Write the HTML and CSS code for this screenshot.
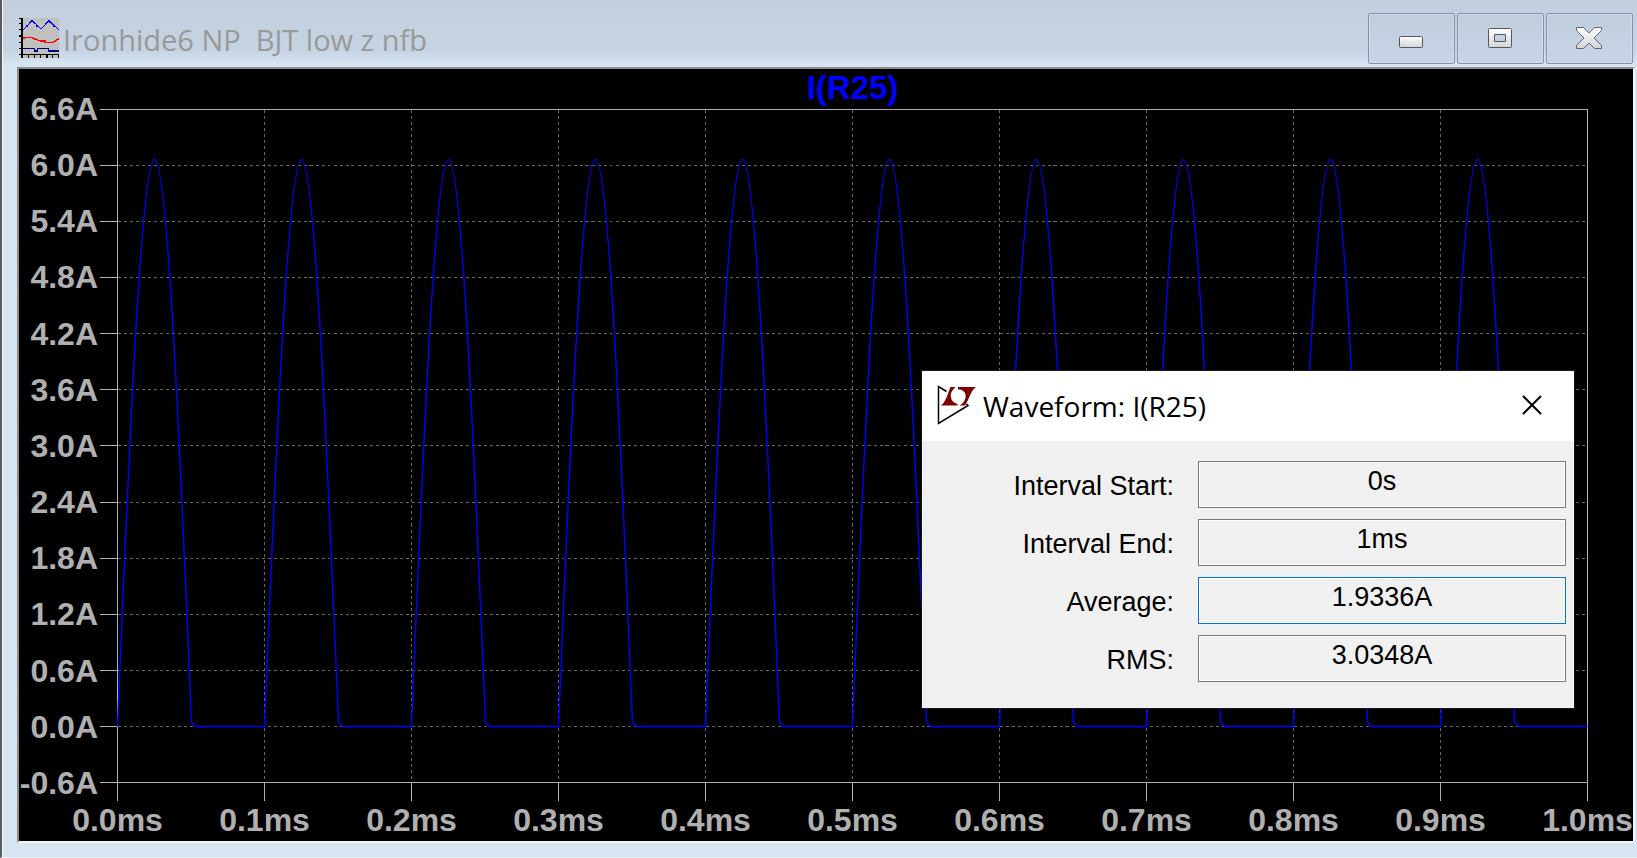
FILE: index.html
```html
<!DOCTYPE html>
<html lang="en">
<head>
<meta charset="utf-8">
<title>Ironhide6 NP BJT low z nfb</title>
<link rel="stylesheet" href="styles.css">
</head>
<body>
<main class="window">
  <header class="titlebar">
    <svg class="titlebar-icon" viewBox="0 0 40 40" aria-hidden="true" shape-rendering="crispEdges" fill="none">
      <path fill="#c0c0c0" d="M2 0h38v40H2z"/>
      <path stroke="#0000ff" d="M4 12L8 8L13 2.500L22 11L30 2.500L40 12"/>
      <path fill="#0000ff" d="M12 2h2v2h-2zM7 7h2v2H7zM17 7h2v2h-2zM30 3h2v2h-2zM34 7h2v2h-2z"/>
      <path stroke="#ff0000" stroke-width="1.500" d="M4 20.500L6 19.500H12L20 22.500L28 24.500H34L40 20.500"/>
      <path fill="#ff0000" d="M21 22h6v2h-6z"/>
      <path fill="#000080" d="M4 30h12v1H4zM15 30h1v4h-1zM15 32h4v2h-4zM18 30h1v4h-1zM18 30h12v1H18zM29 30h1v4h-1zM29 32h11v2H29z"/>
      <path fill="#000" d="M2 0h2v40H2zM0 0h4v1H0zM0 5h3v1H0zM0 11h3v1H0zM0 17h3v2H0zM0 24h3v1H0zM0 30h3v1H0zM0 36h40v1H0zM9 36h1v4H9zM15 36h1v4h-1zM21 36h1v4h-1zM27 36h2v4h-2zM33 36h1v4h-1zM39 36h1v4h-1z"/>
    </svg>
    <h1 class="titlebar-text">Ironhide6 NP  BJT low z nfb</h1>
    <div class="window-buttons">
      <button class="window-button" type="button" aria-label="Minimize">
        <svg class="window-glyph" viewBox="0 0 28 24" aria-hidden="true">
          <defs><linearGradient id="metal" x1="0" y1="0" x2="0" y2="1"><stop offset="0" stop-color="#fff"/><stop offset="1" stop-color="#d4d4d4"/></linearGradient></defs>
          <rect x="2.500" y="10.500" width="23" height="11" rx="1" fill="url(#metal)" stroke="#535666"/>
        </svg>
      </button>
      <button class="window-button" type="button" aria-label="Maximize">
        <svg class="window-glyph" viewBox="0 0 28 24" aria-hidden="true">
          <path fill="url(#metal)" fill-rule="evenodd" stroke="#535666" d="M3.500 2.500h21q1 0 1 1v17q0 1 -1 1h-21q-1 0 -1-1v-17q0-1 1-1zM8.500 8.500v7h11v-7z"/>
        </svg>
      </button>
      <button class="window-button" type="button" aria-label="Close">
        <svg class="window-glyph" viewBox="0 0 28 24" aria-hidden="true">
          <path fill="url(#metal)" stroke="#626573" d="M1.500 1.500H8.500L14 7L19.500 1.500H26.500V4.500L19 12L26.500 19.500V22.500H19.500L14 17L8.500 22.500H1.500V19.500L9 12L1.500 4.500z"/>
        </svg>
      </button>
    </div>
  </header>

  <section class="plot" aria-label="Waveform plot">
    <h2 class="trace-name">I(R25)</h2>
    <ul class="y-axis">
      <li>6.6A</li><li>6.0A</li><li>5.4A</li><li>4.8A</li><li>4.2A</li><li>3.6A</li><li>3.0A</li><li>2.4A</li><li>1.8A</li><li>1.2A</li><li>0.6A</li><li>0.0A</li><li>-0.6A</li>
    </ul>
    <div class="plot-area">
      <svg class="plot-svg" viewBox="-0.5 -0.5 1471 674" preserveAspectRatio="none" aria-hidden="true">
        <path class="grid" d="M0 56H1470M0 112H1470M0 168H1470M0 224H1470M0 280H1470M0 336H1470M0 393H1470M0 449H1470M0 505H1470M0 561H1470M0 617H1470"/>
        <path class="grid" d="M147 0V673M294 0V673M441 0V673M588 0V673M735 0V673M882 0V673M1029 0V673M1176 0V673M1323 0V673"/>
        <path class="axis" d="M-18 0H1470V691M0 0V691M-18 673H1470"/>
        <path class="axis" d="M-18 56H0M-18 112H0M-18 168H0M-18 224H0M-18 280H0M-18 336H0M-18 393H0M-18 449H0M-18 505H0M-18 561H0M-18 617H0"/>
        <path class="axis" d="M147 673V691M294 673V691M441 673V691M588 673V691M735 673V691M882 673V691M1029 673V691M1176 673V691M1323 673V691"/>
        <path class="trace" d="M0 617c12-291 24-567 37-567c13 0 25 276 37 563l4 4h69c12-291 24-567 37-567c13 0 25 276 37 563l4 4h69c12-291 24-567 37-567c13 0 25 276 37 563l4 4h69c12-291 24-567 37-567c13 0 25 276 37 563l4 4h69c12-291 24-567 37-567c13 0 25 276 37 563l4 4h69c12-291 24-567 37-567c13 0 25 276 37 563l4 4h69c12-291 24-567 37-567c13 0 25 276 37 563l4 4h69c12-291 24-567 37-567c13 0 25 276 37 563l4 4h69c12-291 24-567 37-567c13 0 25 276 37 563l4 4h69c12-291 24-567 37-567c13 0 25 276 37 563l4 4h69"/>
      </svg>
    </div>
    <ul class="x-axis">
      <li>0.0ms</li><li>0.1ms</li><li>0.2ms</li><li>0.3ms</li><li>0.4ms</li><li>0.5ms</li><li>0.6ms</li><li>0.7ms</li><li>0.8ms</li><li>0.9ms</li><li>1.0ms</li>
    </ul>
  </section>

  <section class="dialog" role="dialog" aria-labelledby="dialog-title">
    <header class="dialog-header">
      <svg class="dialog-icon" viewBox="0 0 40 40" aria-hidden="true">
        <path fill="none" stroke="#000" stroke-width="1.500" d="M9.500 6.500L1.500 1.500V38.500L31 20.500L29.500 19"/>
        <path fill="#800000" d="M13.500 2H18.500C14.500 5.500 13 9 14 12.500C14.500 15.500 16.500 18 20.500 19V20.500H3.500C9 18 11 7 13.500 2zM21 2H39C34 5 32.500 14 28 20.500H22.500C27 18 29 14 28.500 10C28 6.500 25.500 4.500 21 4.500z"/>
      </svg>
      <h2 class="dialog-title" id="dialog-title">Waveform: I(R25)</h2>
      <button class="dialog-close" type="button" aria-label="Close">
        <svg class="dialog-close-glyph" viewBox="0 0 20 20" aria-hidden="true"><path fill="none" stroke="#000" stroke-width="2" d="M1 1L19 19M19 1L1 19"/></svg>
      </button>
    </header>
    <form class="dialog-body">
      <label class="field-label" for="start">Interval Start:</label>
      <input class="field" id="start" type="text" value="0s" readonly>
      <label class="field-label" for="end">Interval End:</label>
      <input class="field" id="end" type="text" value="1ms" readonly>
      <label class="field-label" for="average">Average:</label>
      <input class="field field-active" id="average" type="text" value="1.9336A" readonly>
      <label class="field-label" for="rms">RMS:</label>
      <input class="field" id="rms" type="text" value="3.0348A" readonly>
    </form>
  </section>
</main>
</body>
</html>
```

FILE: styles.css
```css
* {
  box-sizing: border-box;
}

body {
  margin: 0;
  font-family: "Liberation Sans", Arial, sans-serif;
}

h1,
h2,
ul {
  margin: 0;
  padding: 0;
  list-style: none;
}

.window {
  position: relative;
  display: flex;
  flex-direction: column;
  min-height: 100vh;
  padding: 0 2px 14px 14px;
  border-left: 2px solid #5b5b60;
  border-bottom: 1px solid #eef3f8;
  box-shadow: inset 1px 0 #f4f8fc;
  background: linear-gradient(#c3cfdd, #c6d3e2 50px, #d7e4f2 64px);
}

.titlebar {
  display: flex;
  align-items: flex-start;
  height: 67px;
  padding: 13px 2px 0 3px;
}

.titlebar-icon {
  flex: none;
  width: 40px;
  height: 40px;
  margin-top: 5px;
}

.titlebar-text {
  flex: 1;
  margin: 7px 0 0 4px;
  color: #999;
  font-family: "Open Sans", sans-serif;
  font-size: 29px;
  font-weight: normal;
  line-height: 40px;
  white-space: pre;
}

.window-buttons {
  display: flex;
  gap: 2px;
}

.window-button {
  display: flex;
  align-items: center;
  justify-content: center;
  width: 87px;
  height: 51px;
  padding: 0 2px 2px 0;
  border: 1px solid #8592ad;
  border-radius: 2px;
  background: linear-gradient(#c0cddd, #c7d5e6);
  box-shadow: inset 0 0 0 1px #d0dcea;
}

.window-glyph {
  width: 28px;
  height: 24px;
}

.plot {
  flex: 1;
  display: grid;
  grid-template-columns: 98px 1fr 45px;
  grid-template-rows: 40px 1fr 58px;
  margin-left: 1px;
  border: 2px solid;
  border-color: #8c8c8c #f6f6f6 #f6f6f6 #8c8c8c;
  background: #000;
  color: #b0b0b0;
  font-size: 32px;
  font-weight: bold;
  line-height: 38px;
}

.trace-name {
  grid-area: 1 / 2;
  color: #00f;
  font-size: 33px;
  text-align: center;
}

.y-axis {
  grid-area: 2 / 1;
  display: flex;
  flex-direction: column;
  justify-content: space-between;
  margin: -19px 19px -19px 0;
  white-space: nowrap;
}

.y-axis li {
  display: flex;
  justify-content: flex-end;
}

.plot-area {
  grid-area: 2 / 2;
  display: grid;
}

.plot-svg {
  width: 100%;
  height: 100%;
  min-height: 0;
  overflow: visible;
  fill: none;
  shape-rendering: crispEdges;
}

.plot-svg path {
  vector-effect: non-scaling-stroke;
}

.grid {
  stroke: #666;
  stroke-dasharray: 3 3;
}

.axis {
  stroke: #b0b0b0;
}

.trace {
  stroke: #00f;
  stroke-width: 1.4;
  shape-rendering: geometricPrecision;
}

.x-axis {
  grid-area: 3 / 2;
  display: flex;
  justify-content: space-between;
  padding-top: 18px;
}

.x-axis li {
  display: flex;
  justify-content: center;
  width: 1px;
}

.dialog {
  position: absolute;
  top: 370px;
  right: 62px;
  width: 654px;
  border: 1px solid #1a1a1a;
  background: #f0f0f0;
  color: #000;
}

.dialog-header {
  display: flex;
  align-items: center;
  height: 70px;
  padding: 0 32px 0 15px;
  background: #fff;
}

.dialog-icon {
  width: 40px;
  height: 40px;
  margin-bottom: 2px;
}

.dialog-title {
  flex: 1;
  margin-left: 6px;
  font-family: "Open Sans", sans-serif;
  font-size: 28px;
  font-weight: normal;
  line-height: 40px;
}

.dialog-close {
  display: flex;
  margin-bottom: 2px;
  padding: 0;
  border: 0;
  background: none;
}

.dialog-close-glyph {
  width: 20px;
  height: 20px;
}

.dialog-body {
  display: grid;
  grid-template-columns: 1fr 368px;
  gap: 11px 24px;
  padding: 20px 8px 26px 0;
  font-size: 27px;
}

.field-label {
  padding-top: 8px;
  line-height: 34px;
  text-align: right;
}

.field {
  width: 100%;
  height: 47px;
  padding: 0 0 6px;
  border: 1px solid #7a7a7a;
  box-shadow: inset 0 0 0 1px #fff;
  background: #f0f0f0;
  color: #000;
  font: inherit;
  text-align: center;
}

.field-active {
  border-color: #0078d7;
}
```
